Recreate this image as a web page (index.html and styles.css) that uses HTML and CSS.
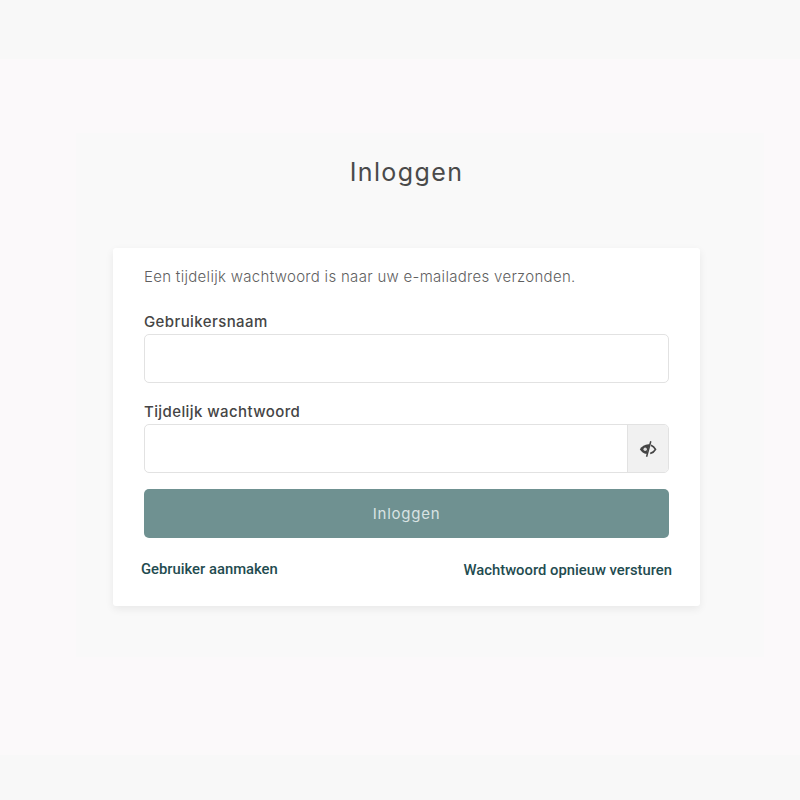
FILE: index.html
```html
<!DOCTYPE html>
<html lang="nl">
<head>
<meta charset="utf-8">
<title>Inloggen</title>
<link rel="stylesheet" href="styles.css">
</head>
<body>
<div class="topbar"></div>
<main class="page">
  <section class="panel">
    <h1 class="title">Inloggen</h1>
    <div class="card">
      <p class="notice">Een tijdelijk wachtwoord is naar uw e-mailadres verzonden.</p>
      <label class="label">Gebruikersnaam</label>
      <div class="field"></div>
      <label class="label label-second">Tijdelijk wachtwoord</label>
      <div class="field field-group">
        <div class="field-main"></div>
        <div class="eye">
          <svg width="18" height="18" viewBox="0 0 18 18" fill="none">
            <path d="M9.500 4.200C5.800 4.300 2.800 6.200 0.800 9.300c1.600 2.600 3.800 4.300 6.900 4.800L10.800 4.300z" fill="#444"/>
            <circle cx="6.200" cy="9.200" r="1.700" fill="#ddd"/>
            <path d="M12 5.300c1.900 .7 3.400 2 4.500 4-1 1.900-2.700 3.400-5.300 4.200" stroke="#444" stroke-width="1.700"/>
            <path d="M11.800 1.200L7.600 16.800" stroke="#444" stroke-width="1.500"/>
          </svg>
        </div>
      </div>
      <button class="submit" type="button">Inloggen</button>
      <div class="links">
        <a class="link">Gebruiker aanmaken</a>
        <a class="link link-right">Wachtwoord opnieuw versturen</a>
      </div>
    </div>
  </section>
</main>
<div class="bottombar"></div>
</body>
</html>
```
FILE: styles.css
```css
* { box-sizing: border-box; }
html, body { margin: 0; height: 100%; }
body {
  width: 800px;
  height: 800px;
  overflow: hidden;
  display: flex;
  flex-direction: column;
  background: #fbf9fa;
  font-family: Inter, "Open Sans", sans-serif;
  color: #3d3d3d;
}
.topbar { height: 59px; background: #f8f8f8; }
.page { flex: 1; padding: 74px 36px 0 76px; }
.bottombar { height: 45px; background: #f8f8f8; }
.panel {
  height: 524px;
  background: #f9f9f9;
  padding-top: 22px;
  padding-left: 37px;
}
.title {
  margin: 0 0 59px;
  width: 587px;
  text-align: center;
  font-size: 25px;
  line-height: 34px;
  font-weight: 400;
  letter-spacing: 1.4px;
  color: #4a4a4a;
}
.card {
  width: 587px;
  height: 358px;
  background: #fff;
  border-radius: 3px;
  box-shadow: 0 3px 8px rgba(0,0,0,0.07);
  padding: 19px 31px 0;
}
.notice {
  margin: 0 0 25px;
  font-size: 15px;
  line-height: 20px;
  font-weight: 300;
  letter-spacing: 0.3px;
  color: #5f5f5f;
}
.label {
  display: block;
  font-size: 15px;
  line-height: 20px;
  font-weight: 500;
  letter-spacing: 0.4px;
  color: #454545;
  margin-bottom: 2px;
}
.label-second { margin-top: 19px; }
.field {
  height: 49px;
  background: #fff;
  border: 1.500px solid #e2e2e2;
  border-radius: 5px;
}
.field-group { display: flex; }
.field-main { flex: 1; }
.eye {
  width: 41px;
  display: flex;
  align-items: center;
  justify-content: center;
  background: #f1f1f1;
  border-left: 1.500px solid #e2e2e2;
  border-radius: 0 4px 4px 0;
}
.submit {
  display: block;
  width: 100%;
  height: 49px;
  margin-top: 16px;
  border: 0;
  border-radius: 5px;
  background: #6f9191;
  color: #d9e3e3;
  font-family: inherit;
  font-size: 15px;
  letter-spacing: 0.75px;
}
.links {
  display: flex;
  justify-content: space-between;
  margin: 22px -3px 0;
}
.link {
  font-family: Roboto, sans-serif;
  font-size: 14.800px;
  line-height: 18px;
  font-weight: 500;
  color: #1f4c50;
}
.link-right { margin-top: 1px; }
```
